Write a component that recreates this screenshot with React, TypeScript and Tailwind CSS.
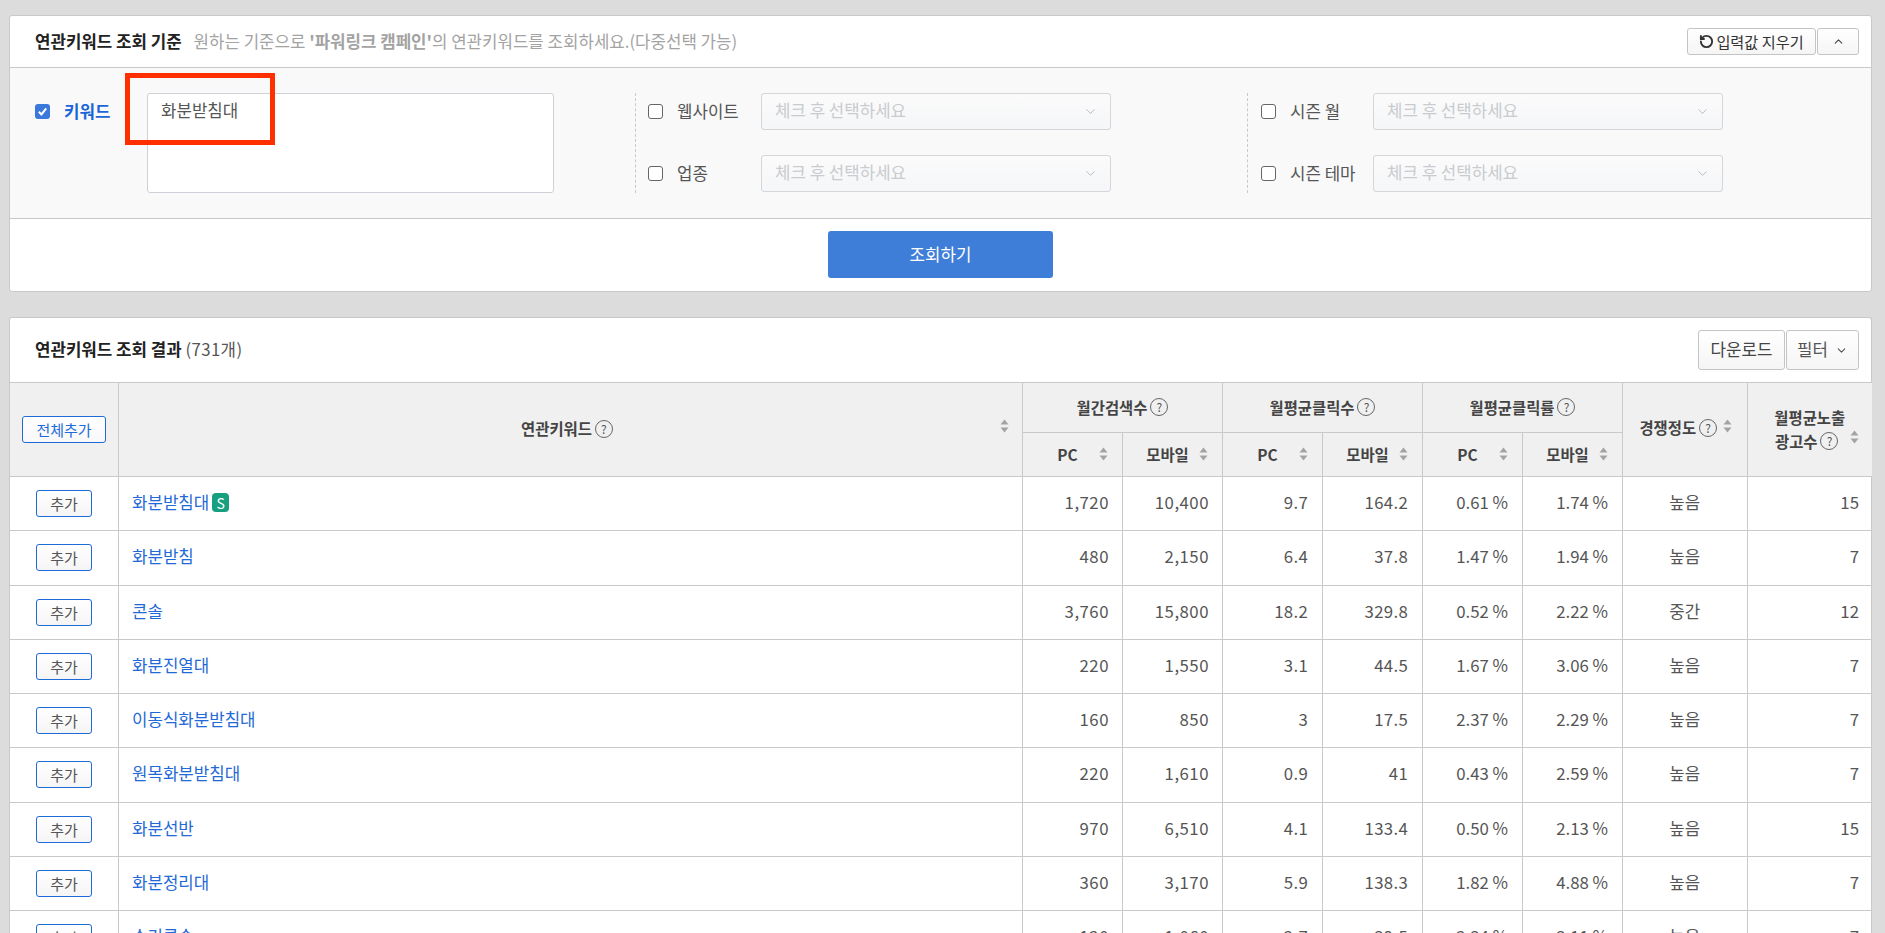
import React from "react";
import { ChevronDown, ChevronUp, RotateCcw } from "lucide-react";

const rows: string[][] = [
  ["화분받침대", "1,720", "10,400", "9.7", "164.2", "0.61 %", "1.74 %", "높음", "15"],
  ["화분받침", "480", "2,150", "6.4", "37.8", "1.47 %", "1.94 %", "높음", "7"],
  ["콘솔", "3,760", "15,800", "18.2", "329.8", "0.52 %", "2.22 %", "중간", "12"],
  ["화분진열대", "220", "1,550", "3.1", "44.5", "1.67 %", "3.06 %", "높음", "7"],
  ["이동식화분받침대", "160", "850", "3", "17.5", "2.37 %", "2.29 %", "높음", "7"],
  ["원목화분받침대", "220", "1,610", "0.9", "41", "0.43 %", "2.59 %", "높음", "7"],
  ["화분선반", "970", "6,510", "4.1", "133.4", "0.50 %", "2.13 %", "높음", "15"],
  ["화분정리대", "360", "3,170", "5.9", "138.3", "1.82 %", "4.88 %", "높음", "7"],
  ["수기콤솔", "120", "1,060", "2.7", "39.5", "2.34 %", "3.11 %", "높음", "7"],
];

function Sort({ className = "" }: { className?: string }) {
  return (
    <svg width="9" height="14" viewBox="0 0 9 14" className={className}>
      <path d="M4.5 0.5 L8.5 5.5 H0.5 Z" fill="#a3a3a3" />
      <path d="M4.5 13.5 L8.5 8.5 H0.5 Z" fill="#a3a3a3" />
    </svg>
  );
}

function Help() {
  return (
    <span className="inline-flex items-center justify-center w-[18px] h-[18px] rounded-full border border-[#666] text-[12px] font-normal leading-none text-[#555] shrink-0">
      ?
    </span>
  );
}

function Box({ checked = false }: { checked?: boolean }) {
  return checked ? (
    <span className="flex items-center justify-center w-[15px] h-[15px] rounded-[3px] bg-[#3b78dc] shrink-0">
      <svg width="11" height="11" viewBox="0 0 11 11">
        <path d="M1.8 5.8 L4.4 8.4 L9.2 2.4" fill="none" stroke="#fff" strokeWidth="2" />
      </svg>
    </span>
  ) : (
    <span className="block w-[15px] h-[15px] rounded-[3px] border border-[#666] bg-white shrink-0" />
  );
}

function SelectRow({ label, labelW }: { label: string; labelW: string }) {
  return (
    <div className="flex items-center h-[37px]">
      <Box />
      <span className={`ml-[14px] text-[#555] ${labelW}`}>{label}</span>
      <div className="flex items-center justify-between w-[350px] h-[37px] pl-[13px] pr-[12px] rounded-[3px] border border-[#d4d6d9] bg-gradient-to-b from-[#fbfbfc] to-[#f5f6f7] text-[#c9cbce]">
        <span className="-mt-[1px]">체크 후 선택하세요</span>
        <ChevronDown size={15} strokeWidth={1.5} color="#b5b7ba" />
      </div>
    </div>
  );
}

function Th({
  children,
  className = "",
  rowSpan,
  colSpan,
}: {
  children?: React.ReactNode;
  className?: string;
  rowSpan?: number;
  colSpan?: number;
}) {
  return (
    <th
      rowSpan={rowSpan}
      colSpan={colSpan}
      className={`relative border border-[#c9c9c9] bg-[#f0f0f0] text-[15.4px] font-bold text-[#444] p-0 align-middle ${className}`}
    >
      {children}
    </th>
  );
}

function GroupTh({ label }: { label: string }) {
  return (
    <Th colSpan={2}>
      <div className="flex items-center justify-center gap-[3px]">
        <span>{label}</span>
        <Help />
      </div>
    </Th>
  );
}

function SubTh({ label }: { label: string }) {
  return (
    <Th>
      <div className="flex items-center pl-[19px]">
        <span className="w-[51px] text-center font-bold">{label}</span>
        <Sort className="ml-[6px]" />
      </div>
    </Th>
  );
}

function AddButton() {
  return (
    <button className="w-[56px] h-[27px] rounded-[3px] border border-[#1d6ad8] bg-gradient-to-b from-white to-[#f5f5f5] text-[15px] leading-none text-[#555]">
      추가
    </button>
  );
}

export default function App() {
  return (
    <div
      className="h-screen overflow-hidden bg-[#dcdcdc] pt-[15px] pl-[9px] pr-[13px] text-[16.8px] text-[#333]"
      style={{ fontFamily: '"Noto Sans CJK KR", "Noto Sans", sans-serif' }}
    >
      <section className="rounded-[3px] border border-[#c9c9c9] bg-white">
        <div className="flex items-center justify-between h-[52px] border-b border-[#c9c9c9] pl-[25px] pr-[12px]">
          <div className="flex items-center">
            <h2 className="font-bold text-[#222]">연관키워드 조회 기준</h2>
            <p className="ml-[12px] text-[#a3a3a3]">
              원하는 기준으로 <b className="font-bold">'파워링크 캠페인'</b>의 연관키워드를 조회하세요.(다중선택 가능)
            </p>
          </div>
          <div className="flex gap-[1px]">
            <button className="flex items-center justify-center w-[129px] h-[27px] rounded-[3px] border border-[#c4c4c4] bg-gradient-to-b from-white to-[#f5f5f5] text-[15.2px] text-[#333]">
              <RotateCcw size={15} strokeWidth={3} className="mr-[2px]" />
              입력값 지우기
            </button>
            <button className="flex items-center justify-center w-[42px] h-[27px] rounded-[3px] border border-[#c4c4c4] bg-gradient-to-b from-white to-[#f5f5f5]">
              <ChevronUp size={13} strokeWidth={2} color="#444" />
            </button>
          </div>
        </div>

        <div className="relative flex h-[151px] pt-[25px] border-b border-[#c9c9c9] bg-[#f9f9fa]">
          <div className="flex w-[625px] h-[100px] pl-[25px]">
            <div className="flex items-center h-[37px]">
              <Box checked />
              <span className="ml-[14px] w-[83px] font-bold text-[#1a66d8]">키워드</span>
            </div>
            <div className="w-[407px] h-[100px] pl-[13px] pt-[4px] rounded-[3px] border border-[#ced2d8] bg-white text-[#555]">
              화분받침대
            </div>
          </div>
          <div className="flex flex-col gap-[25px] w-[612px] h-[100px] pl-[12px] border-l border-dashed border-[#c9c9c9]">
            <SelectRow label="웹사이트" labelW="w-[84px]" />
            <SelectRow label="업종" labelW="w-[84px]" />
          </div>
          <div className="flex flex-col gap-[25px] h-[100px] pl-[13px] border-l border-dashed border-[#c9c9c9]">
            <SelectRow label="시즌 월" labelW="w-[83px]" />
            <SelectRow label="시즌 테마" labelW="w-[83px]" />
          </div>
          <div className="absolute left-[115px] top-[5px] w-[150px] h-[72px] border-[5px] border-[#ff2f00]" />
        </div>

        <div className="flex justify-center h-[72px] pt-[12px]">
          <button className="w-[225px] h-[47px] rounded-[3px] bg-[#3f7ed8] text-white">조회하기</button>
        </div>
      </section>

      <section className="mt-[25px] rounded-t-[3px] border border-b-0 border-[#c9c9c9] bg-white">
        <div className="flex items-center justify-between h-[64px] pl-[25px] pr-[12px]">
          <h2 className="font-bold text-[#222]">
            연관키워드 조회 결과 <span className="font-normal tracking-[0.4px] text-[#555]">(731개)</span>
          </h2>
          <div className="flex gap-[1px]">
            <button className="w-[87px] h-[40px] rounded-[3px] border border-[#c4c4c4] bg-gradient-to-b from-white to-[#f5f5f5] text-[#444]">
              다운로드
            </button>
            <button className="flex items-center justify-center gap-[7px] w-[73px] h-[40px] rounded-[3px] border border-[#c4c4c4] bg-gradient-to-b from-white to-[#f5f5f5] text-[#555]">
              필터
              <ChevronDown size={13} strokeWidth={2} />
            </button>
          </div>
        </div>

        <table className="w-full table-fixed border-collapse">
          <colgroup>
            <col className="w-[108.5px]" />
            <col className="w-[904px]" />
            <col className="w-[100px]" />
            <col className="w-[100px]" />
            <col className="w-[100px]" />
            <col className="w-[100px]" />
            <col className="w-[100px]" />
            <col className="w-[100px]" />
            <col className="w-[124.5px]" />
            <col className="w-[125px]" />
          </colgroup>
          <thead>
            <tr className="h-[50px]">
              <Th rowSpan={2} className="border-l-0">
                <button className="w-[84px] h-[27px] rounded-[3px] border border-[#1d6ad8] bg-gradient-to-b from-white to-[#f8f8f8] text-[15px] font-normal leading-none text-[#1d6ad8]">
                  전체추가
                </button>
              </Th>
              <Th rowSpan={2}>
                <div className="flex items-center justify-center gap-[3px] pr-[7px] -mt-[1px]">
                  <span>연관키워드</span>
                  <Help />
                </div>
                <Sort className="absolute right-[13px] top-[36px]" />
              </Th>
              <GroupTh label="월간검색수" />
              <GroupTh label="월평균클릭수" />
              <GroupTh label="월평균클릭률" />
              <Th rowSpan={2}>
                <div className="flex items-center justify-center gap-[3px] -mt-[3px] pl-[2px]">
                  <span>경쟁정도</span>
                  <Help />
                  <Sort className="ml-[3px] -mt-[4px]" />
                </div>
              </Th>
              <Th rowSpan={2} className="border-r-0">
                <div className="leading-[24px] -mt-[1px]">
                  월평균노출
                  <br />
                  <span className="inline-flex items-center gap-[3px] pr-[6px]">
                    광고수 <Help />
                  </span>
                </div>
                <Sort className="absolute right-[13px] top-[47px]" />
              </Th>
            </tr>
            <tr className="h-[44px]">
              <SubTh label="PC" />
              <SubTh label="모바일" />
              <SubTh label="PC" />
              <SubTh label="모바일" />
              <SubTh label="PC" />
              <SubTh label="모바일" />
            </tr>
          </thead>
          <tbody>
            {rows.map((r) => (
              <tr key={r[0]} className="h-[54.25px]">
                <td className="border border-l-0 border-[#c9c9c9] p-0 text-center">
                  <AddButton />
                </td>
                <td className="border border-[#c9c9c9] pl-[13px] pb-[2px] text-[#1f6ad6]">
                  <span className="inline-flex items-center gap-[3px]">
                    {r[0]}
                    {r[0] === "화분받침대" && (
                      <span className="flex items-center justify-center w-[17px] h-[19px] rounded-[4px] bg-[#17a07f] text-[14px] font-normal leading-none text-white">
                        S
                      </span>
                    )}
                  </span>
                </td>
                {r.slice(1, 3).map((v, i) => (
                  <td key={i} className="border border-[#c9c9c9] pr-[13px] pb-[2px] text-right tracking-[0.5px] text-[#555]">
                    {v}
                  </td>
                ))}
                {r.slice(3, 5).map((v, i) => (
                  <td key={i} className="border border-[#c9c9c9] pr-[14px] pb-[2px] text-right tracking-[0.3px] text-[#555]">
                    {v}
                  </td>
                ))}
                {r.slice(5, 7).map((v, i) => (
                  <td key={i} className="border border-[#c9c9c9] pr-[14px] pb-[2px] text-right text-[#555]">
                    {v}
                  </td>
                ))}
                <td className="border border-[#c9c9c9] pb-[2px] text-center text-[#555]">{r[7]}</td>
                <td className="border border-r-0 border-[#c9c9c9] pr-[13px] pb-[2px] text-right text-[#555]">{r[8]}</td>
              </tr>
            ))}
          </tbody>
        </table>
      </section>
    </div>
  );
}
